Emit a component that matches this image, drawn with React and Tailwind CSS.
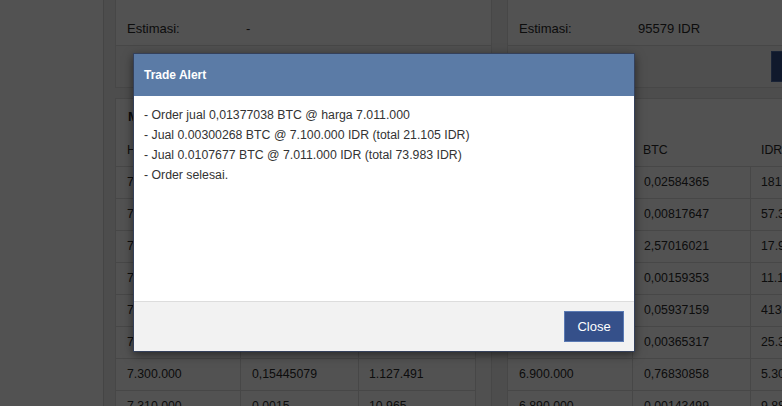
import React from 'react'

const leftRows = [
  ['7.150.000', '0,01250000', '89.375'],
  ['7.190.000', '0,00420331', '30.221'],
  ['7.200.000', '0,11839512', '852.444'],
  ['7.230.000', '0,00350000', '25.305'],
  ['7.250.000', '0,02760019', '200.101'],
  ['7.280.000', '0,00137362', '10.000'],
  ['7.300.000', '0,15445079', '1.127.491'],
  ['7.310.000', '0,0015', '10.965'],
]

const rightRows = [
  ['7.010.000', '0,02584365', '181.164'],
  ['7.008.000', '0,00817647', '57.301'],
  ['6.980.000', '2,57016021', '17.939.718'],
  ['6.975.000', '0,00159353', '11.114'],
  ['6.960.000', '0,05937159', '413.226'],
  ['6.935.000', '0,00365317', '25.334'],
  ['6.900.000', '0,76830858', '5.301.329'],
  ['6.890.000', '0,00143499', '9.887'],
]

const Column = ({ estimasi, title, rows, withButton }) => (
  <div className="w-[377px] shrink-0">
    {/* Estimasi panel */}
    <div className="border-x border-[#dcdcdc] bg-white">
      <div className="flex h-[46px] items-end border-b border-[#dcdcdc] pb-[6px] pl-[11px] text-[13px] leading-5">
        <span className="w-[119px]">Estimasi:</span>
        <span>{estimasi}</span>
      </div>
      <div className="flex h-[42px] items-center border-b border-[#dcdcdc] bg-[#f5f5f5]">
        {withButton && (
          <div className="ml-[263px] h-[31px] w-[60px] border border-[#4f6fa8] bg-[#34508a]" />
        )}
      </div>
    </div>

    {/* Orders panel */}
    <div className="mt-[10px] border border-[#dcdcdc] bg-white">
      <div className="flex h-[36px] items-center pl-3 text-[13px] font-bold">{title}</div>
      <div className="flex">
        <div className="w-[360px]">
          <div className="grid h-[31px] grid-cols-[125px_118px_117px] items-center text-[12.3px]">
            <span className="pl-[11px]">Harga</span>
            <span className="pl-[10px]">BTC</span>
            <span className="pl-[10px]">IDR</span>
          </div>
          {rows.map((r) => (
            <div
              key={r[0]}
              className="grid h-[32px] grid-cols-[125px_118px_117px] border-t border-[#dcdcdc] text-[12.3px]"
            >
              <span className="flex items-center border-r border-[#dcdcdc] pl-[11px]">{r[0]}</span>
              <span className="flex items-center border-r border-[#dcdcdc] pl-[11px]">{r[1]}</span>
              <span className="flex items-center border-r border-[#dcdcdc] pl-[10px]">{r[2]}</span>
            </div>
          ))}
        </div>
        <div className="w-[16px] bg-[#f7f7f7]" />
      </div>
    </div>
  </div>
)

export default function App() {
  return (
    <div className="relative h-[406px] w-[782px] overflow-hidden bg-[#f0f0f0] font-['Liberation_Sans',Arial,sans-serif] text-[#2a2a2a]">
      <div className="flex h-full">
        <aside className="w-[104px] shrink-0 border-r border-[#d6d6d6] bg-white" />
        <main className="flex gap-[15px] pl-[11px]">
          <Column estimasi="-" title="Market Jual" rows={leftRows} />
          <Column estimasi="95579 IDR" title="Market Beli" rows={rightRows} withButton />
        </main>
      </div>

      {/* backdrop */}
      <div className="absolute inset-0 bg-black/[0.68]" />

      {/* Trade Alert dialog */}
      <div className="absolute left-[133px] top-[53px] w-[502px] border border-[#34405a] bg-white shadow-[0_3px_9px_rgba(0,0,0,0.5)]">
        <div className="flex h-[42px] items-center bg-[#5b7ba6] pl-[10px] text-[12px] font-bold text-white">
          Trade Alert
        </div>
        <div className="h-[205px] pl-[10px] pt-[9px] text-[12.3px] leading-5 text-[#333]">
          <div>- Order jual 0,01377038 BTC @ harga 7.011.000</div>
          <div>- Jual 0.00300268 BTC @ 7.100.000 IDR (total 21.105 IDR)</div>
          <div>- Jual 0.0107677 BTC @ 7.011.000 IDR (total 73.983 IDR)</div>
          <div>- Order selesai.</div>
        </div>
        <div className="flex h-[50px] items-center justify-end border-t border-[#dddddd] bg-[#f2f2f2] pr-[10px]">
          <button className="h-[31px] w-[60px] border border-[#5a7ab4] bg-[#35508a] text-[13px] text-white">
            Close
          </button>
        </div>
      </div>
    </div>
  )
}
